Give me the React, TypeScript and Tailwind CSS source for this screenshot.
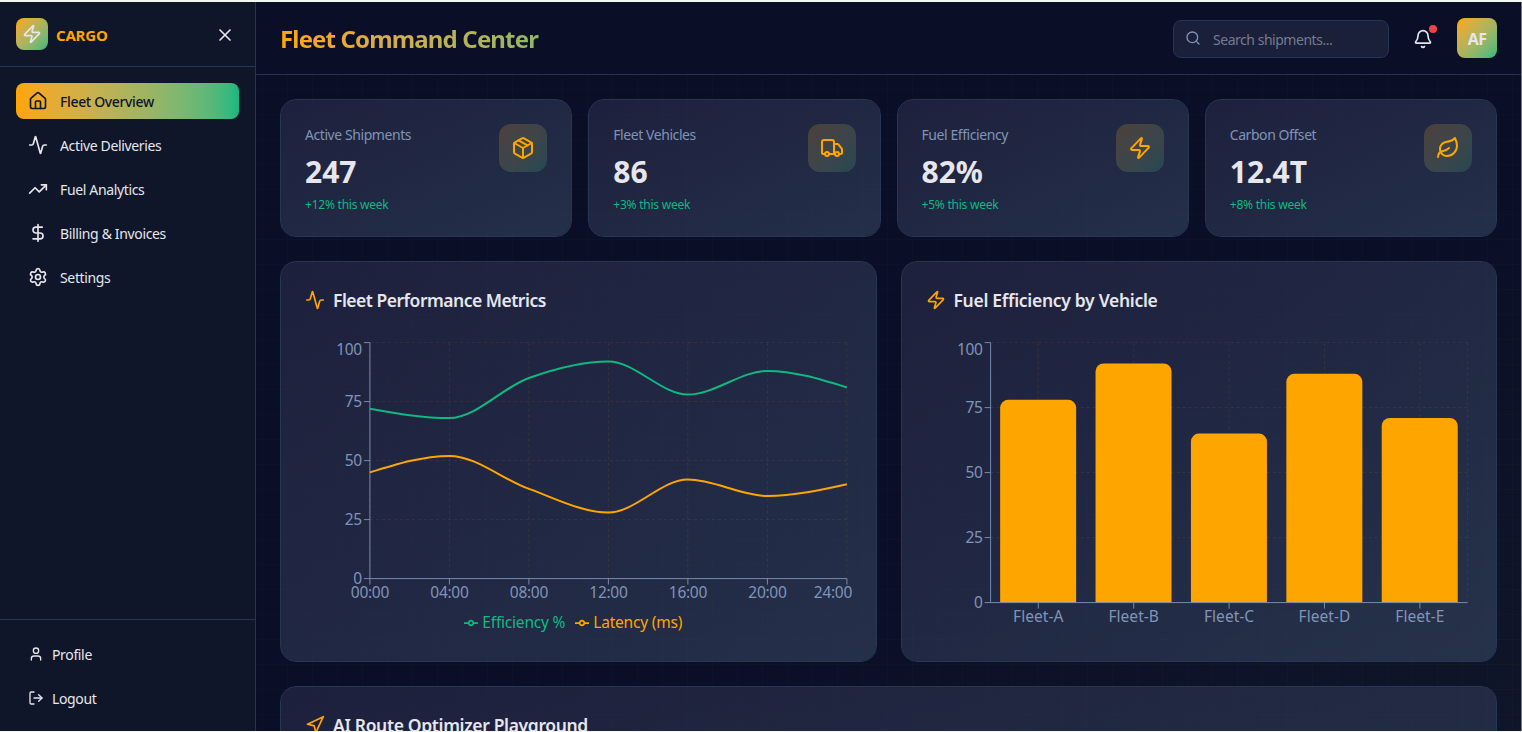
import { type FC, type ReactNode } from "react";
import {
    Activity,
    Bell,
    DollarSign,
    House,
    Leaf,
    LogOut,
    Navigation,
    Package,
    Search,
    Settings,
    TrendingUp,
    Truck,
    User,
    X,
    Zap,
    type LucideIcon
} from "lucide-react";

type NavItem = { label: string; icon: LucideIcon; active?: boolean };
type Stat = { label: string; value: string; change: string; icon: LucideIcon };
type Point = [number, number];

const navItems: NavItem[] = [
    { label: "Fleet Overview", icon: House, active: true },
    { label: "Active Deliveries", icon: Activity },
    { label: "Fuel Analytics", icon: TrendingUp },
    { label: "Billing & Invoices", icon: DollarSign },
    { label: "Settings", icon: Settings }
];

const stats: Stat[] = [
    { label: "Active Shipments", value: "247", change: "+12% this week", icon: Package },
    { label: "Fleet Vehicles", value: "86", change: "+3% this week", icon: Truck },
    { label: "Fuel Efficiency", value: "82%", change: "+5% this week", icon: Zap },
    { label: "Carbon Offset", value: "12.4T", change: "+8% this week", icon: Leaf }
];

const hours = ["00:00", "04:00", "08:00", "12:00", "16:00", "20:00", "24:00"];
const efficiency = [72, 68, 85, 92, 78, 88, 81];
const latency = [45, 52, 38, 28, 42, 35, 40];
const vehicles = [
    { name: "Fleet-A", value: 78 },
    { name: "Fleet-B", value: 92 },
    { name: "Fleet-C", value: 65 },
    { name: "Fleet-D", value: 88 },
    { name: "Fleet-E", value: 71 }
];
const ticks = [0, 25, 50, 75, 100];

const LEFT = 65;
const TOP = 5;
const WIDTH = 477;

// monotone cubic through the points, same tangents as d3's curveMonotoneX
const monotone = (pts: Point[]) => {
    const n = pts.length;
    const slope = (i: number) => (pts[i + 1][1] - pts[i][1]) / (pts[i + 1][0] - pts[i][0]);
    const m: number[] = [];
    for (let i = 1; i < n - 1; i++) {
        const s0 = slope(i - 1);
        const s1 = slope(i);
        m[i] = (Math.sign(s0) + Math.sign(s1)) * Math.min(Math.abs(s0), Math.abs(s1), 0.25 * Math.abs(s0 + s1)) || 0;
    }
    m[0] = (3 * slope(0) - m[1]) / 2;
    m[n - 1] = (3 * slope(n - 2) - m[n - 2]) / 2;
    let d = `M${pts[0][0]},${pts[0][1]}`;
    for (let i = 0; i < n - 1; i++) {
        const dx = (pts[i + 1][0] - pts[i][0]) / 3;
        d += `C${pts[i][0] + dx},${pts[i][1] + dx * m[i]},${pts[i + 1][0] - dx},${pts[i + 1][1] - dx * m[i + 1]},${pts[i + 1][0]},${pts[i + 1][1]}`;
    }
    return d;
};

type AxesProps = { height: number; xs: number[]; labels: string[]; labelXs: number[]; labelClass: string };

const Grid: FC<{ height: number; xs: number[] }> = ({ height, xs }) => (
    <g stroke="#ffa500" strokeOpacity={0.1} strokeDasharray="3 3">
        {ticks.slice(1).map((t) => {
            const y = TOP + height * (1 - t / 100);
            return <line key={t} x1={LEFT} x2={LEFT + WIDTH} y1={y} y2={y} />;
        })}
        {xs.map((x) => (
            <line key={x} x1={x} x2={x} y1={TOP} y2={TOP + height} />
        ))}
    </g>
);

const Axes: FC<AxesProps> = ({ height, xs, labels, labelXs, labelClass }) => (
    <>
        <g stroke="#8094b8" strokeOpacity={0.9}>
            <line x1={LEFT} x2={LEFT + WIDTH} y1={TOP + height} y2={TOP + height} />
            <line x1={LEFT} x2={LEFT} y1={TOP} y2={TOP + height} />
            {ticks.map((t) => {
                const y = TOP + height * (1 - t / 100);
                return <line key={t} x1={LEFT - 6} x2={LEFT} y1={y} y2={y} />;
            })}
            {xs.map((x) => (
                <line key={x} x1={x} x2={x} y1={TOP + height} y2={TOP + height + 6} />
            ))}
        </g>
        <g fill="#8094b8" className="text-[15.5px]">
            {ticks.map((t) => (
                <text
                    key={t}
                    x={LEFT - 8}
                    y={TOP + height * (1 - t / 100) + (t === 100 ? 12.5 : 5.8)}
                    textAnchor="end"
                    className="tracking-[-0.35px]"
                >
                    {t}
                </text>
            ))}
            {labels.map((label, i) => (
                <text key={label} x={labelXs[i]} y={TOP + height + 19} textAnchor="middle" className={labelClass}>
                    {label}
                </text>
            ))}
        </g>
    </>
);

const LineChart = () => {
    const height = 236;
    const xs = hours.map((_, i) => LEFT + (WIDTH / 6) * i);
    const toPoints = (data: number[]): Point[] => data.map((v, i) => [xs[i], TOP + height * (1 - v / 100)]);
    const labelXs = xs.map((x, i) => (i === 6 ? x - 14 : x));

    return (
        <svg width="547" height="276" className="block overflow-visible">
            <g transform="translate(-0.1 -0.4)">
                <Grid height={height} xs={xs} />
                <Axes height={height} xs={xs} labels={hours} labelXs={labelXs} labelClass="tracking-[-0.3px]" />
                <path d={monotone(toPoints(efficiency))} fill="none" stroke="#10b981" strokeWidth={2} />
                <path d={monotone(toPoints(latency))} fill="none" stroke="#ffa500" strokeWidth={2} />
            </g>
        </svg>
    );
};

const BarChart = () => {
    const height = 260;
    const step = WIDTH / 5;
    const xs = vehicles.map((_, i) => LEFT + step * (i + 0.5));

    return (
        <svg width="547" height="300" className="block overflow-visible">
            <g transform="translate(-0.4 -0.4)">
                <Grid height={height} xs={[...xs, LEFT + WIDTH]} />
                {vehicles.map(({ name, value }, i) => {
                    const h = (height * value) / 100;
                    const x = LEFT + step * i + step * 0.1;
                    const y = TOP + height - h;
                    const r = 8;
                    return (
                        <path
                            key={name}
                            fill="#ffa500"
                            d={`M${x},${y + r}a${r},${r},0,0,1,${r},${-r}h${76 - 2 * r}a${r},${r},0,0,1,${r},${r}v${h - r}h-76z`}
                        />
                    );
                })}
                <Axes height={height} xs={xs} labels={vehicles.map((v) => v.name)} labelXs={xs} labelClass="tracking-[0.05px]" />
            </g>
        </svg>
    );
};

const LegendItem: FC<{ label: string; className: string }> = ({ label, className }) => (
    <span className={`flex items-center gap-1 ${className}`}>
        <svg width="14" height="14" viewBox="0 0 32 32" fill="none" stroke="currentColor" strokeWidth="4" className="mt-0.5">
            <path d="M0,16h10.67A5.33,5.33,0,1,1,21.33,16H32M21.33,16A5.33,5.33,0,1,1,10.67,16" />
        </svg>
        {label}
    </span>
);

type PanelProps = { icon: LucideIcon; title: string; titleClass: string; children?: ReactNode };

const Panel: FC<PanelProps> = ({ icon: Icon, title, titleClass, children }) => (
    <section className="rounded-2xl border border-[#263753] bg-linear-to-br from-[#2a2c4a]/60 to-[#354561]/60 bg-clip-padding p-6">
        <h3 className={`mb-6 flex h-7 items-center gap-2 text-[17.5px] font-semibold ${titleClass}`}>
            <Icon size={20} className="text-[#ffa500]" />
            {title}
        </h3>
        {children}
    </section>
);

const StatCard: FC<Stat> = ({ label, value, change, icon: Icon }) => (
    <div className="flex h-[138px] items-start justify-between rounded-2xl border border-[#263753] bg-linear-to-br from-[#2a2c4a]/60 to-[#354561]/60 bg-clip-padding p-6">
        <div>
            <p className="text-sm leading-[22px] tracking-[-0.43px] text-[#8094b8]">{label}</p>
            <p className="mt-1 text-[30px] leading-[43px] font-bold">{value}</p>
            <p className="mt-1 text-xs leading-4 tracking-[-0.23px] text-[#10b981]">{change}</p>
        </div>
        <div className="flex h-12 w-12 items-center justify-center rounded-xl bg-linear-to-br from-[#ffa500]/20 to-[#10b981]/20 text-[#ffa500]">
            <Icon size={24} />
        </div>
    </div>
);

const Sidebar = () => (
    <aside className="flex h-[730px] w-64 shrink-0 flex-col border-r border-[#233554] bg-[#0f1629]">
        <div className="flex h-[65px] items-center justify-between border-b border-[#233554] px-4">
            <div className="flex items-center gap-2">
                <div className="flex h-8 w-8 items-center justify-center rounded-lg bg-linear-to-br from-[#ffa500] to-[#10b981]">
                    <Zap size={20} />
                </div>
                <span className="pt-0.5 text-[15px] font-bold tracking-[-0.2px] text-[#ffa500]">CARGO</span>
            </div>
            <X size={20} className="mt-0.5 mr-1" />
        </div>
        <nav className="flex flex-1 flex-col gap-2 p-4">
            {navItems.map(({ label, icon: Icon, active }) => (
                <a
                    key={label}
                    className={`flex h-9 items-center gap-3 rounded-lg px-3 text-sm tracking-[-0.35px] ${active ? "bg-linear-to-r from-[#ffa500] to-[#10b981] font-medium text-[#0f1629]" : ""}`}
                >
                    <Icon size={20} />
                    <span className="pt-0.5">{label}</span>
                </a>
            ))}
        </nav>
        <div className="flex flex-col gap-2 border-t border-[#233554] px-4 pt-4 pb-4 text-sm tracking-[-0.35px]">
            <a className="flex h-9 items-center gap-2 px-3">
                <User size={16} />
                <span className="pt-0.5">Profile</span>
            </a>
            <a className="flex h-9 items-center gap-2 px-3">
                <LogOut size={16} />
                <span className="pt-0.5">Logout</span>
            </a>
        </div>
    </aside>
);

const Header = () => (
    <header className="flex h-[73px] shrink-0 items-center justify-between border-b border-[#233554] bg-[#0a0e27] px-6">
        <h1 className="mt-0.5 w-[400px] bg-linear-to-r from-[#ffa500] to-[#10b981] bg-clip-text text-2xl font-bold tracking-[-0.85px] text-transparent">
            Fleet Command Center
        </h1>
        <div className="flex items-center">
            <div className="mt-0.5 flex h-[38px] w-[216px] items-center gap-3 rounded-lg border border-[#233554] bg-[#1a1f3a] px-[11px] text-sm tracking-[-0.47px] text-[#757b8f]">
                <Search size={16} className="mb-0.5 text-[#8094b8]" />
                <span className="pt-0.5">Search shipments...</span>
            </div>
            <div className="relative mt-px mr-6 ml-6">
                <Bell size={20} />
                <span className="absolute -top-1 -right-1 h-2 w-2 rounded-full bg-[#ef4444]" />
            </div>
            <div className="flex h-10 w-10 items-center justify-center rounded-lg bg-linear-to-br from-[#ffa500] to-[#10b981] pt-0.5 text-base font-bold tracking-[-0.6px]">
                AF
            </div>
        </div>
    </header>
);

const App = () => (
    <div className="flex h-[732px] w-[1522px] flex-col overflow-hidden bg-[#f4f8f2] font-['Noto_Sans',sans-serif] text-[#e6e6ec]">
        <div className="h-0.5 shrink-0" />
        <div className="flex h-[729px] w-[1522px] overflow-hidden border-r border-[#77787c] bg-[#0a0e27]">
            <Sidebar />
            <div className="flex min-w-0 flex-1 flex-col bg-linear-to-br from-[#0a0e27] via-[#0a0e27] via-60% to-[#0f1629]">
                <Header />
                {/* faint 25px grid behind the cards */}
                <main className="flex-1 overflow-hidden bg-[linear-gradient(to_right,rgba(255,165,0,0.02)_1px,transparent_1px),linear-gradient(to_bottom,rgba(255,165,0,0.02)_1px,transparent_1px)] bg-[size:25px_25px] bg-[position:6px_14px] p-6">
                    <div className="grid w-[1217px] grid-cols-4 gap-4">
                        {stats.map((stat) => (
                            <StatCard key={stat.label} {...stat} />
                        ))}
                    </div>
                    <div className="mt-6 grid w-[1217px] grid-cols-2 gap-6 [&>section]:h-[401px]">
                        <Panel icon={Activity} title="Fleet Performance Metrics" titleClass="tracking-[-0.5px]">
                            <LineChart />
                            <div className="-mt-1 flex justify-center gap-2.5 pr-2.5 text-[15.5px] leading-6 tracking-[-0.2px]">
                                <LegendItem label="Efficiency %" className="text-[#10b981]" />
                                <LegendItem label="Latency (ms)" className="text-[#ffa500]" />
                            </div>
                        </Panel>
                        <Panel icon={Zap} title="Fuel Efficiency by Vehicle" titleClass="tracking-[-0.3px]">
                            <BarChart />
                        </Panel>
                    </div>
                    <div className="mt-6 w-[1217px] [&>section]:h-[300px]">
                        <Panel icon={Navigation} title="AI Route Optimizer Playground" titleClass="tracking-[-0.35px]" />
                    </div>
                </main>
            </div>
        </div>
    </div>
);

export default App;
